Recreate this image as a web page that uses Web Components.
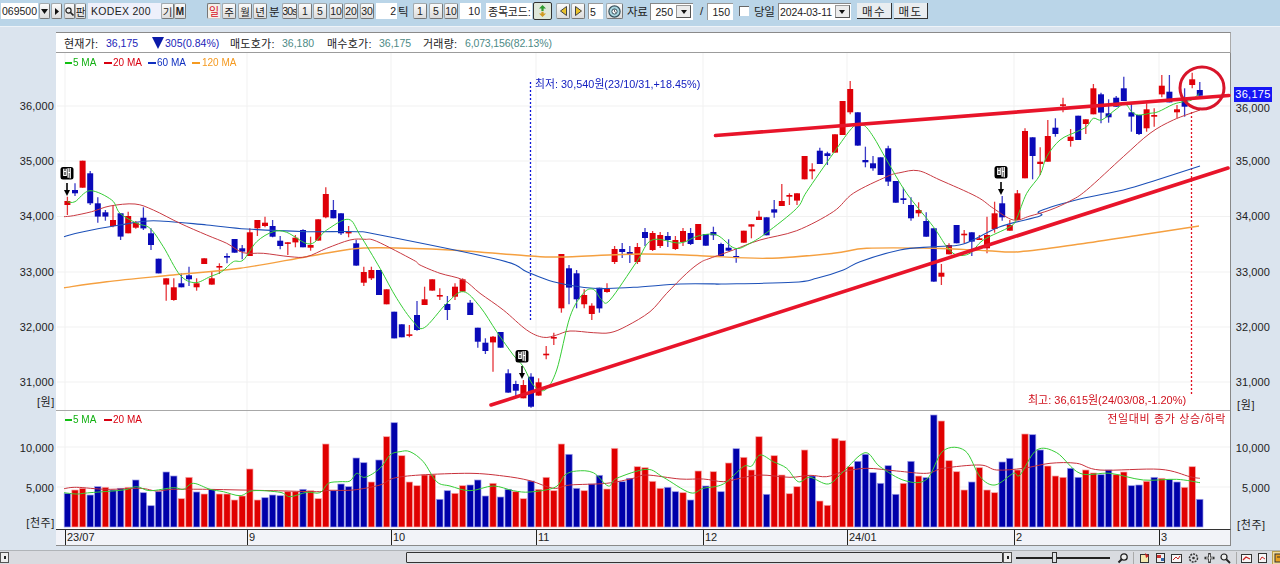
<!DOCTYPE html>
<html lang="ko">
<head>
<meta charset="utf-8">
<title>KODEX 200</title>
<style>
  html, body { margin: 0; height: 100%; overflow: hidden; background: #dbe4ee; }
  body { display: flex; flex-direction: column; width: 1280px; height: 564px;
    font: 11px "Liberation Sans", "Noto Sans CJK KR", sans-serif; color: #222; }
</style>
</head>
<body>
<hts-toolbar></hts-toolbar>
<chart-panel></chart-panel>
<status-bar></status-bar>

<script>
// ---------- small controls ----------
class ToolButton extends HTMLElement {
  constructor() {
    super();
    this.attachShadow({ mode: "open" });
    this.shadowRoot.innerHTML = `
    <style>
      :host { display: inline-flex; align-items: center; justify-content: center; box-sizing: border-box;
        height: 16px; flex: none; overflow: hidden; border: 1px solid #a2a9ad; border-radius: 2px;
        border-right-color: #777; border-bottom-color: #777;
        background: linear-gradient(#fbfbfb, #dcdcdc); font-size: 10.5px; color: #222; white-space: nowrap; }
      :host([active]) { background: #f3efe9; color: #d8101c; border-color: #777 #ccc #ccc #777; font-size: 11px; }
      :host([flat]) { background: #e9edf0; border: 0; border-right: 1px solid #333; border-bottom: 1px solid #333; border-radius: 0; }
      :host([pressed]) { border: 1px solid #333; background: #dfe8da; }
    </style>
    <slot></slot>`;
  }
}
customElements.define("tool-button", ToolButton);

class TextBox extends HTMLElement {
  constructor() {
    super();
    this.attachShadow({ mode: "open" });
    this.shadowRoot.innerHTML = `
    <style>
      :host { display: inline-flex; align-items: center; box-sizing: border-box; height: 16px; flex: none;
        overflow: hidden; padding: 0 1px; background: #fff; font-size: 10.5px; color: #222; white-space: nowrap; }
      :host([right]) { justify-content: flex-end; }
      :host([lav]) { background: #eef0fb; padding-left: 3px; letter-spacing: .3px; }
      :host([sunk]) { border-left: 1px solid #999; border-top: 1px solid #999; }
    </style>
    <slot></slot>`;
  }
}
customElements.define("text-box", TextBox);

class ComboBox extends HTMLElement {
  constructor() {
    super();
    this.attachShadow({ mode: "open" });
    this.shadowRoot.innerHTML = `
    <style>
      :host { display: inline-flex; align-items: center; box-sizing: border-box; height: 17px; flex: none;
        background: #fff; border-left: 1px solid #888; border-top: 1px solid #888; font-size: 10.5px; color: #222; }
      .v { flex: 1; padding: 0 3px 0 1px; white-space: nowrap; text-align: right; }
      .arrow { width: 15px; height: 13px; margin-right: 2px; box-sizing: border-box; border: 1px solid #999;
        border-right-color: #555; border-bottom-color: #555; background: #ececec;
        display: flex; align-items: center; justify-content: center; flex: none; }
      .arrow i { border: 3px solid transparent; border-top: 4px solid #111; border-bottom: 0; }
    </style>
    <span class="v"><slot></slot></span><span class="arrow"><i></i></span>`;
  }
}
customElements.define("combo-box", ComboBox);

// ---------- top toolbar ----------
class HtsToolbar extends HTMLElement {
  constructor() {
    super();
    this.attachShadow({ mode: "open" });
    this.shadowRoot.innerHTML = `
    <style>
      :host { display: flex; align-items: center; box-sizing: border-box; height: 27px; flex: none; padding: 0 0 4px 1px;
        background: #bad5e8; border-bottom: 1px solid #eef3f8; font-size: 12px; color: #222; }
      .t { flex: none; white-space: nowrap; font-size: 11.5px; }
      tool-button.w { width: 14px; }
      tool-button.s { width: 11px; }
      svg { display: block; }
      .chk { flex: none; box-sizing: border-box; width: 10px; height: 10px; margin-left: 6px; background: #fff;
        border-left: 1px solid #666; border-top: 1px solid #666; }
    </style>
    <text-box style="width:37px">069500</text-box>
    <tool-button class="s" style="margin-left:1px"><svg width="7" height="5"><path d="M0 0h7L3.5 5z" fill="#111"/></svg></tool-button>
    <tool-button class="s" style="margin-left:1px"><svg width="4" height="7"><path d="M0 0v7l4-3.5z" fill="#111"/></svg></tool-button>
    <tool-button class="s" style="margin-left:2px"><svg width="9" height="9"><circle cx="3.5" cy="3.5" r="2.6" fill="none" stroke="#222" stroke-width="1.2"/><path d="M5.5 5.5L8.5 8.5" stroke="#222" stroke-width="1.6"/></svg></tool-button>
    <tool-button class="s">판</tool-button>
    <text-box lav style="width:73px;margin-left:2px">KODEX 200</text-box>
    <tool-button style="width:13px">기</tool-button>
    <tool-button style="width:12px;font-size:10px;font-weight:700">M</tool-button>

    <tool-button class="w" active style="margin-left:21px">일</tool-button>
    <tool-button class="w" style="margin-left:1px">주</tool-button>
    <tool-button class="w" style="margin-left:2px">월</tool-button>
    <tool-button class="w" style="margin-left:1px">년</tool-button>
    <span class="t" style="width:12px;margin-left:2px">분</span>
    <tool-button style="width:15px;margin-left:1px;letter-spacing:-.8px">30s</tool-button>
    <tool-button class="w" style="margin-left:1px">1</tool-button>
    <tool-button class="w" style="margin-left:1px">5</tool-button>
    <tool-button class="w" style="margin-left:2px">10</tool-button>
    <tool-button class="w" style="margin-left:1px">20</tool-button>
    <tool-button class="w" style="margin-left:2px">30</tool-button>
    <text-box right style="width:21px;margin-left:2px">2</text-box>
    <span class="t" style="width:12px;margin-left:1px">틱</span>
    <tool-button class="w" style="margin-left:3px">1</tool-button>
    <tool-button class="w" style="margin-left:2px">5</tool-button>
    <tool-button class="w" style="margin-left:1px">10</tool-button>
    <text-box right style="width:21px;margin-left:2px">10</text-box>

    <text-box style="width:46px;margin-left:5px;padding:0 0 0 2px;letter-spacing:-.2px;font-size:11px">종목코드:</text-box>
    <tool-button pressed style="width:19px;height:18px;margin-left:1px">
      <svg width="9" height="12" viewBox="0 0 9 12"><path d="M4.5 0L8 3.5H5.6V6H3.4V3.5H1z" fill="#2d9a2d"/><path d="M4.5 12L1 8.5h2.4V6.8h2.2v1.7H8z" fill="#d09a20"/></svg>
    </tool-button>
    <tool-button style="width:14px;margin-left:4px"><svg width="7" height="10"><path d="M6.5 .5v9L.5 5z" fill="#e8c12c" stroke="#444"/></svg></tool-button>
    <tool-button style="width:14px;margin-left:1px"><svg width="7" height="10"><path d="M.5 .5v9l6-4.5z" fill="#e8c12c" stroke="#444"/></svg></tool-button>
    <text-box sunk style="width:15px;margin-left:3px">5</text-box>
    <tool-button style="width:17px;margin-left:3px"><svg width="13" height="13"><circle cx="6.5" cy="6.5" r="5.6" fill="#a9d6df" stroke="#35505c" stroke-width="1.2"/><circle cx="6.5" cy="6.5" r="2.6" fill="#fff" stroke="#35505c"/><path d="M6.5 4.5v2l1.4 1" stroke="#333" fill="none" stroke-width=".8"/></svg></tool-button>
    <span class="t" style="width:19px;margin-left:4px;letter-spacing:-.4px">자료</span>
    <combo-box style="width:43px;margin-left:4px">250</combo-box>
    <span class="t" style="width:7px;margin-left:7px">/</span>
    <text-box sunk right style="width:26px;height:17px;padding-right:3px">150</text-box>
    <span class="chk"></span>
    <span class="t" style="width:20px;margin-left:5px;letter-spacing:-.4px">당일</span>
    <combo-box style="width:73px;margin-left:4px;letter-spacing:-.1px">2024-03-11</combo-box>
    <tool-button flat style="width:35px;margin-left:6px;letter-spacing:1.5px;font-size:11.5px">매수</tool-button>
    <tool-button flat style="width:34px;margin-left:2px;letter-spacing:1.5px;font-size:11.5px">매도</tool-button>`;
  }
}
customElements.define("hts-toolbar", HtsToolbar);

// ---------- quote strip above the chart ----------
class QuoteBar extends HTMLElement {
  constructor() {
    super();
    this.attachShadow({ mode: "open" });
    this.shadowRoot.innerHTML = `
    <style>
      :host { display: flex; align-items: center; box-sizing: border-box; padding-left: 8px; background: #fff;
        border-top: 1px solid #8a8a8a; border-bottom: 1px solid #9c9c9c; border-right: 1px solid #aaa;
        font-size: 11px; color: #222; white-space: nowrap; }
      span { flex: none; }
      .l { letter-spacing: .25px; }
      .b { color: #1a24b8; font-size: 10.5px; }
      .g { color: #4d8a86; font-size: 10.5px; }
      i { flex: none; border: 6.5px solid transparent; border-top: 12px solid #0a1aa8; border-bottom: 0; margin: 1px 1px 0 0; }
    </style>
    <span class="l" style="width:42px">현재가:</span><span class="b" style="width:46px">36,175</span>
    <i></i><span class="b" style="width:65px">305(0.84%)</span>
    <span class="l" style="width:52px">매도호가:</span><span class="g" style="width:45px">36,180</span>
    <span class="l" style="width:52px">매수호가:</span><span class="g" style="width:44px">36,175</span>
    <span class="l" style="width:42px">거래량:</span><span class="g" style="letter-spacing:-.15px">6,073,156(82.13%)</span>`;
  }
}
customElements.define("quote-bar", QuoteBar);

// ---------- value axis, labels sit at their scale position ----------
class ValueAxis extends HTMLElement {
  constructor() {
    super();
    this.attachShadow({ mode: "open" });
  }
  connectedCallback() {
    const top = +this.getAttribute("top");
    const side = this.getAttribute("side");
    const pos = side == "left" ? "right:2px" : "right:10px";
    const items = (this.getAttribute("ticks") || "").split(";").map((t) => {
      const [label, y] = t.split("@");
      return `<span style="top:${y - top - 7}px;${pos}">${label}</span>`;
    });
    const u = this.getAttribute("unit").split("@");
    items.push(`<span class="u" style="top:${u[1] - top - 7}px;${side == "left" ? "right:1px" : "left:6px"}">${u[0]}</span>`);
    this.shadowRoot.innerHTML = `
    <style>
      :host { display: block; position: relative; font-size: 11px; color: #222; }
      span { position: absolute; line-height: 14px; white-space: nowrap; letter-spacing: .1px; }
      .u { letter-spacing: .6px; font-size: 11px; }
    </style>
    ${items.join("")}<slot></slot>`;
  }
}
customElements.define("value-axis", ValueAxis);

class PriceTag extends HTMLElement {
  constructor() {
    super();
    this.attachShadow({ mode: "open" });
    this.shadowRoot.innerHTML = `
    <style>
      :host { position: absolute; left: 3px; width: 38px; height: 15px; background: #1616f5; color: #fff;
        font-size: 11px; line-height: 15px; text-align: center; letter-spacing: .3px; }
    </style>
    <slot></slot>`;
  }
}
customElements.define("price-tag", PriceTag);

// ---------- chart data, all in page pixels ----------
const X0 = 67.4, STEP = 7.6;
const barX = (i) => X0 + STEP * i;

// 3x readings: colour, body top, body bottom, wick top, wick bottom
function readCandles(oy, s, k = 3) {
  return s.trim().split(/\s+/).map((c) => {
    const v = c.slice(1).split(",").map((n) => oy + n / k);
    const [t, b, wt = t, wb = b] = v;
    return { up: c[0] == "r", t, b, wt, wb };
  });
}

const CANDLES = [
  ...readCandles(150, `r153,165,140,195 b120,130,100,138 r32,113 b70,160,63,165 b160,200,142,218 b187,200,180,212
    r210,228,165,232 b190,260,190,270 r198,250,185,250 r218,233,213,236 b203,235,172,240 b250,285,235,300 b326,370
    r385,404,385,452 r412,450,385,452 b400,412,370,412 b376,388,350,408 r400,412,385,422 r325,342 r385,404,365,404
    r348,352,340,372 b318,322,310,340 b267,308 b295,305,285,328 r247,318,235,318 r210,235,210,258 r218,228,200,232
    b228,260,210,262 b272,288,258,298 r277,280,277,315 r263,277,255,292 b240,292,238,292 r285,293,260,302 r208,272
    r132,202,112,205 b180,205,150,205 b190,250,190,255 r245,250,228,262 b280,347,270,347 r366,398,350,408
    r360,385,350,390 b360,435`),
  ...readCandles(260, `r88,133 b155,235 b193,232 r223,227,195,232 b165,210,123,212 r118,135,80,135 r58,92
    r105,109,85,120 b132,150,108,180 r80,110,70,120 r58,95,55,95 b128,165,120,165 b203,245,203,263 b248,273,235,282
    r230,247,228,335 b216,263 b340,398,328,398 b372,392,362,408 r375,415,360,415 b350,440,340,443 r367,407,355,407
    r281,285,258,298 r231,235,218,255 r-18,145,-18,158 b25,83,15,133 b40,118,30,145 r105,133,88,145 r137,162,130,180
    b83,145,83,158 r86,96,70,98`),
  ...readCandles(0, `r249,262,246,264 b249,252,243,258 b252,255,246,263 r247,262,243,264 b232,238,228,246 r233,250,231,251
    r235,246,232,248 b236,240,232,247 r240,249,236,250 r231,242,228,246 b233,244,228,245 r224,240`, 1),
  ...readCandles(80, `b462,497 b456,466,440,480 b492,528,488,528 b503,512,478,512 b528,532,505,548 r452,488
    r433,440,433,475 r410,420,392,420 b412,466 b388,398,360,413 r363,378,312,378 r345,350,340,375 r340,362,340,375
    r228,298 r268,274,250,298 b212,252,203,252 b220,228,215,255 r163,218 r63,165 r27,97,3,103 b97,197
    b240,247,200,262 b250,265,228,272 b232,285 b205,305,197,318 b303,368 b355,360,323,372 b375,415,352,422
    r390,400,367,410 b423,470,397,470 b445,605 r578,590,552,615 r495,523,490,523 b435,490 r461,465,450,490
    b457,485,457,528 r475,480,465,480 r465,505,410,520 r400,447,365,458 b370,412,348,422 r435,452,420,452
    r340,420,330,420 r153,295,145,295 b172,228,172,298`),
  ...readCandles(60, `r305,312,262,345 r228,305,180,305 b203,222,175,230 r133,137,113,157 r230,243,207,260 b167,240
    r178,192,178,222 r85,163,72,163 b103,158,98,190 b160,172,118,188 b113,140,108,140 b85,123,50,123 b157,170,130,215
    b165,222,165,225 r148,205,130,215 r165,170,145,200 r77,103,45,112 b95,127,45,127 r148,157,135,175 b120,140,85,170
    r58,75,38,85 b90,107,66,107`),
];

// top of each volume bar, 3x reading, r/b colour
const VOL = `b280 r270 r265 b285 b260 r262 b270 b265 r262 b240 b278 b317 b275 b216 b228 r296 r232 b276 r282 b268 r282 r282
  r300 r288 r207 r300 b293 b285 b287 r275 r275 b268 r272 r296 r132 b272 b252 b260 b174 b188 r246 b180
  r110 b68 r167 r246 r257 r225 r225 b298 b272 r280 r257 b255 b240 b288 r250 b291 b268 r275 r296 b243 r268 r232 r272 r132
  b163 b265 r272 b252 b226 r267 r145 b245 b235 r200 r203 r244 r265 b262 b275 r278 b300 r213 b258 r215 b275 r189 b146 r172
  r210 r110 b283 r167 r225 r281 r260 r150
  b228 r303 r316 r115 r122 r200 b184 b163 b218 b250 b197 b283 r250 b184 r228 b233 b45 r63 r182 r215 r270 b246 r203 r270
  r278 b186 b175 r210 r102 b104 b150 r198 r228 r232 b205 b232 r210 r219 b224 b210 r224 r216 b257 b255 r244 b232 r235 b238
  b246 r262 r200 b298`.trim().split(/\s+/).map((v) => ({ up: v[0] == "r", t: 400 + v.slice(1) / 3 }));

// line readings: [offset x, offset y, "X,Y X,Y ..."] in 3x crops, or plain pixels with offset 0 and k=1
function line(...parts) {
  const pts = [];
  for (const [ox, oy, s, k = 3] of parts) {
    for (const p of s.trim().split(/\s+/)) {
      const [a, b] = p.split(",");
      pts.push([ox + a / k, oy + b / k]);
    }
  }
  return smooth(pts);
}

function smooth(p) {
  let d = `M${p[0][0].toFixed(1)} ${p[0][1].toFixed(1)}`;
  for (let i = 0; i < p.length - 1; i++) {
    const a = p[i - 1] || p[i], b = p[i], c = p[i + 1], e = p[i + 2] || c;
    const f = (v) => v.toFixed(1);
    d += `C${f(b[0] + (c[0] - a[0]) / 6)} ${f(b[1] + (c[1] - a[1]) / 6)} ${f(c[0] - (e[0] - b[0]) / 6)} ${f(c[1] - (e[1] - b[1]) / 6)} ${f(c[0])} ${f(c[1])}`;
  }
  return d;
}

const MA5 = line(
  [40, 150, "82,155 105,155 150,122 215,150 240,190 290,220 330,235 370,290 420,375 465,398 510,380 545,365 580,335 610,330 650,275 700,245 740,247 810,282 860,240 925,208 960,255 1020,355"],
  [380, 260, "50,115 100,185 133,203 200,130 250,95 300,140 350,215 400,285 430,320 460,375 495,390 530,330 570,170 610,100 640,88 665,120 690,120 770,5"],
  [0, 0, "652,240 680,243 698,236", 1],
  [700, 80, "50,465 105,505 150,490 200,458 290,385 320,335 400,220 460,140 490,135 520,170 560,240 620,340 700,440 740,500 770,525 810,520 850,480 930,440 950,415 980,340"],
  [1040, 60, "0,345 20,290 60,240 110,215 140,200 160,175 185,180 225,150 255,132 275,155 295,165 330,160 355,155 400,133 430,125 455,120 478,100"]
);
const MA20 = line(
  [40, 150, "72,200 100,197 155,185 210,168 285,162 340,180 420,220 500,255 560,280 610,308 670,310 750,320 800,320 860,295 930,270 975,268 1010,274"],
  [380, 260, "100,0 120,15 180,40 250,60 300,100 370,150 440,210 490,232 530,225 570,213 640,218 690,218 740,198 810,155 860,100 920,40"],
  [700, 80, "0,548 30,535 100,510 180,480 290,452 400,395 460,340 560,290 600,278 655,272 720,300 830,350 880,385 940,420"],
  [0, 0, "1030,216 1050,210 1070,201", 1],
  [1040, 60, "140,390 250,290 330,220 400,180 480,150"]
);
const MA60 = line(
  [40, 150, "72,260 130,245 240,225 340,212 500,225 620,237 800,245 950,245 1020,255"],
  [380, 260, "360,0 440,35 520,65 640,85 760,82 900,72 1020,72"],
  [700, 80, "60,612 280,607 350,595 430,570 480,545 600,510 700,500 790,492 900,440 1020,408"],
  [0, 0, "1040,211 1080,199", 1],
  [1040, 60, "250,390 350,360 480,318"]
);
const MA120 = line(
  [40, 150, "72,413 200,395 400,375 600,355 800,320 930,298 1020,293"],
  [0, 0, "450,250 530,256 560,257 640,254", 1],
  [700, 80, "0,527 200,535 400,520 500,505 700,505 860,512 960,515"],
  [0, 0, "1080,244 1140,235 1199,226", 1]
);

const V5 = line(
  [40, 400, "72,278 110,282 150,278 250,270 290,260 330,272 400,263 430,268 460,250 510,268 550,275 600,287 640,272 720,277 750,290 800,277 840,278 865,250 900,245 930,243 950,220 975,232"],
  [380, 400, "0,205 30,165 60,155 90,155 130,185 170,245 210,258 270,272 340,258 400,272 450,276 525,262 555,225 590,213 640,218 685,258 710,235 800,208 850,232 930,278 970,265 1030,252 1090,200 1115,198 1140,165 1180,185 1220,205 1255,245"],
  [810, 400, "0,232 55,252 100,215 165,158 210,200 285,242 350,238 400,152 465,152 510,230 555,255 610,220 630,225 680,150 740,158 810,220 900,220 1000,240 1100,238 1170,248"]
);
const V20 = line(
  [40, 400, "72,266 110,262 200,268 300,265 350,273 400,268 500,268 600,270 700,272 830,275 870,271 940,270 1020,255"],
  [380, 400, "40,235 120,225 270,220 370,228 450,242 520,265 570,255 680,250 760,235 800,225 900,237 970,237 1030,245 1080,235 1140,225 1230,232"],
  [810, 400, "0,226 50,230 100,215 170,205 260,213 350,220 400,205 510,195 560,210 640,205 720,190 800,190 870,210 1050,208 1140,230 1170,235"]
);

const MONTHS = [65, 247, 391, 536, 703, 847, 1014, 1159];

// ---------- price pane ----------
class PriceChart extends HTMLElement {
  constructor() {
    super();
    this.attachShadow({ mode: "open" });
  }
  connectedCallback() {
    const RED = "#df0008", BLUE = "#0a0ab8";
    const grid = [106, 161, 216.5, 272, 327, 382]
      .map((y) => `<path d="M57 ${y}H1230"/>`).concat(MONTHS.map((x) => `<path d="M${x} 53V410"/>`)).join("");
    const candles = CANDLES.map((c, i) => {
      const x = barX(i).toFixed(1), col = c.up ? RED : BLUE;
      const h = Math.max(c.b - c.t, 1.6);
      return `<path d="M${x} ${c.wt.toFixed(1)}V${c.wb.toFixed(1)}" stroke="${col}" stroke-width="1.3" opacity=".8"/>` +
        `<rect x="${x - 3}" y="${c.t.toFixed(1)}" width="6" height="${h.toFixed(1)}" fill="${col}"/>`;
    }).join("");
    const badge = (x, y) => `
      <rect x="${x - 6.5}" y="${y}" width="13" height="12.5" rx="2.5" fill="#000"/>
      <text x="${x}" y="${y + 10}" fill="#fff" font-size="10" font-weight="700" text-anchor="middle">배</text>
      <path d="M${x} ${y + 16}V${y + 26}" stroke="#000" stroke-width="1.6"/>
      <path d="M${x - 3} ${y + 23}L${x} ${y + 29}L${x + 3} ${y + 23}z" fill="#000"/>`;
    this.shadowRoot.innerHTML = `
    <style>
      :host { display: block; position: relative; background: #fff; border-right: 1px solid #888; box-sizing: border-box; }
      svg { display: block; font-family: "Liberation Sans", "Noto Sans CJK KR", sans-serif; filter: blur(.25px); }
      .grid path { stroke: #f1f1f1; stroke-width: 1; fill: none; }
      .ma path { fill: none; stroke-width: 1; }
      .legend { font-size: 10px; }
    </style>
    <svg width="1175" height="357" viewBox="56 53 1175 357">
      <g class="grid">${grid}</g>
      <path d="M530.5 82V320" stroke="#1018d8" stroke-width="1.3" stroke-dasharray="2 2" fill="none"/>
      <path d="M1191.5 112V396" stroke="#e01020" stroke-width="1.3" stroke-dasharray="2 2" fill="none"/>
      <g>${candles}</g>
      <g class="ma">
        <path d="${MA120}" stroke="#f5a040" style="stroke-width:1.4"/>
        <path d="${MA60}" stroke="#1c50b8" style="stroke-width:1.1"/>
        <path d="${MA20}" stroke="#c83a42"/>
        <path d="${MA5}" stroke="#36cc36"/>
      </g>
      ${badge(67, 167)}${badge(522, 350)}${badge(1001, 166)}
      <g stroke="#e8142a" stroke-width="3.6" stroke-linecap="round" fill="none">
        <path d="M491 405L1228 168"/>
        <path d="M715.500 135.500L1229 95.500"/>
      </g>
      <ellipse cx="1202" cy="88" rx="22" ry="21" fill="none" stroke="#d8142a" stroke-width="3"/>
      <g class="legend">
        <path d="M65 63h7" stroke="#12c012" stroke-width="2"/><text x="73" y="66" fill="#12b012">5 MA</text>
        <path d="M104 63h8" stroke="#d80010" stroke-width="2"/><text x="113" y="66" fill="#d80010">20 MA</text>
        <path d="M148 63h8" stroke="#1030c0" stroke-width="2"/><text x="157" y="66" fill="#1030c0">60 MA</text>
        <path d="M192 63h8" stroke="#f59a20" stroke-width="2"/><text x="202" y="66" fill="#f59a20">120 MA</text>
      </g>
      <text x="535" y="88" font-size="10.8" letter-spacing=".05" fill="#1420c0">최저: 30,540원(23/10/31,+18.45%)</text>
      <text x="1028" y="404" font-size="11" fill="#d0101c">최고: 36,615원(24/03/08,-1.20%)</text>
    </svg>`;
  }
}
customElements.define("price-chart", PriceChart);

// ---------- volume pane ----------
class VolumeChart extends HTMLElement {
  constructor() {
    super();
    this.attachShadow({ mode: "open" });
  }
  connectedCallback() {
    const base = 527;
    const grid = [447, 487].map((y) => `<path d="M57 ${y}H1230"/>`)
      .concat(MONTHS.map((x) => `<path d="M${x} 411V529"/>`)).join("");
    const bars = VOL.map((v, i) => {
      const x = (barX(i) - 3.2).toFixed(1);
      return `<rect x="${x}" y="${v.t.toFixed(1)}" width="6.4" height="${(base - v.t).toFixed(1)}" fill="${v.up ? "#e00000" : "#0000aa"}" stroke="${v.up ? "#f8a8a8" : "#9a9ae8"}" stroke-width=".7"/>`;
    }).join("");
    this.shadowRoot.innerHTML = `
    <style>
      :host { display: block; background: #fff; border-right: 1px solid #888; box-sizing: border-box; }
      svg { display: block; font-family: "Liberation Sans", "Noto Sans CJK KR", sans-serif; filter: blur(.25px); }
      .grid path { stroke: #f1f1f1; fill: none; }
      .ma path { fill: none; stroke-width: 1; }
    </style>
    <svg width="1175" height="118" viewBox="56 411 1175 118">
      <g class="grid">${grid}</g>
      <g>${bars}</g>
      <g class="ma">
        <path d="${V20}" stroke="#c8303a"/>
        <path d="${V5}" stroke="#36cc36"/>
      </g>
      <path d="M65 420h7" stroke="#12c012" stroke-width="2"/><text x="73" y="423" font-size="10" fill="#12b012">5 MA</text>
      <path d="M104 420h8" stroke="#d80010" stroke-width="2"/><text x="113" y="423" font-size="10" fill="#d80010">20 MA</text>
      <text x="1226" y="423" font-size="11" letter-spacing=".65" fill="#d0101c" text-anchor="end">전일대비 종가 상승/하락</text>
    </svg>`;
  }
}
customElements.define("volume-chart", VolumeChart);

// ---------- date axis ----------
class DateAxis extends HTMLElement {
  constructor() {
    super();
    this.attachShadow({ mode: "open" });
    const labels = ["23/07", "9", "10", "11", "12", "24/01", "2", "3"];
    const cells = labels.map((t, i) => {
      const w = (MONTHS[i + 1] || 1231) - MONTHS[i];
      return `<span style="width:${w}px">${t}</span>`;
    }).join("");
    this.shadowRoot.innerHTML = `
    <style>
      :host { display: flex; box-sizing: border-box; padding-left: 9px; background: #f2f3f8; border-top: 1px solid #333;
        border-bottom: 1px solid #8a8a8a; border-right: 1px solid #888; font-size: 11px; line-height: 15px; color: #222; }
      span { box-sizing: border-box; flex: none; border-left: 1px solid #222; padding-left: 1px; }
    </style>
    ${cells}`;
  }
}
customElements.define("date-axis", DateAxis);

// ---------- page grid of the chart ----------
class ChartPanel extends HTMLElement {
  constructor() {
    super();
    this.attachShadow({ mode: "open" });
    this.shadowRoot.innerHTML = `
    <style>
      :host { display: grid; flex: none; grid-template-columns: 56px 1175px 49px; grid-template-rows: 21px 357px 2px 118px 16px;
        margin-top: 5px; height: 518px; }
      quote-bar { grid-column: 2; grid-row: 1; }
      price-chart { grid-column: 2; grid-row: 2; }
      .sep { grid-column: 2; grid-row: 3; background: #a8a8a8; border-right: 1px solid #888; margin-top: -1px; height: 2px; }
      volume-chart { grid-column: 2; grid-row: 4; margin-top: -1px; height: 118px; }
      date-axis { grid-column: 2; grid-row: 5; margin-top: -1px; }
      .la1 { grid-column: 1; grid-row: 1 / 4; }
      .ra1 { grid-column: 3; grid-row: 1 / 4; }
      .la2 { grid-column: 1; grid-row: 4; }
      .ra2 { grid-column: 3; grid-row: 4; }
    </style>
    <value-axis class="la1" side="left" top="32" unit="[원]@402"
      ticks="36,000@106;35,000@161;34,000@216;33,000@272;32,000@327;31,000@382"></value-axis>
    <quote-bar></quote-bar>
    <value-axis class="ra1" side="right" top="32" unit="[원]@405"
      ticks="36,000@108;35,000@161;34,000@216;33,000@272;32,000@327;31,000@382"><price-tag style="top:55px">36,175</price-tag></value-axis>
    <price-chart></price-chart>
    <div class="sep"></div>
    <value-axis class="la2" side="left" top="411" unit="[천주]@522" ticks="10,000@447;5,000@487"></value-axis>
    <volume-chart></volume-chart>
    <value-axis class="ra2" side="right" top="411" unit="[천주]@524" ticks="10,000@447;5,000@487"></value-axis>
    <date-axis></date-axis>`;
  }
}
customElements.define("chart-panel", ChartPanel);

// ---------- bottom scroll and tool strip ----------
class StatusBar extends HTMLElement {
  constructor() {
    super();
    this.attachShadow({ mode: "open" });
    const icon = (inner) => `<svg width="13" height="12" viewBox="0 0 13 12">${inner}</svg>`;
    this.shadowRoot.innerHTML = `
    <style>
      :host { display: flex; align-items: center; flex: none; height: 14px; background: #d9dbe0;
        border-top: 1px solid #b0b4b8; box-sizing: border-box; overflow: hidden; }
      .btn { flex: none; box-sizing: border-box; width: 9px; height: 11px; background: #eee; border: 1px solid #555;
        display: flex; align-items: center; justify-content: center; }
      .btn i { width: 2px; height: 3px; background: #222; }
      .track { flex: none; width: 397px; height: 13px; background: #d9dbe0; }
      .thumb { flex: none; box-sizing: border-box; width: 597px; height: 11px; background: #e6e7ea; border: 1px solid #333; border-radius: 1px; }
      .slider { flex: none; position: relative; width: 94px; height: 11px; margin-left: 4px; }
      .slider::before { content: ""; position: absolute; left: 0; right: 0; top: 5px; height: 2px; background: #222; }
      .knob { position: absolute; left: 36px; top: 0; width: 5px; height: 11px; box-sizing: border-box; background: #dfe2e6; border: 1px solid #333; }
      .tools { display: flex; align-items: center; margin-left: 7px; }
      .tools svg { flex: none; margin-right: 3.3px; }
      .bar { flex: none; width: 1px; height: 12px; background: #aaa; margin: 0 3.5px 0 0; }
    </style>
    <span class="btn"><i></i></span>
    <span class="track"></span>
    <span class="thumb"></span>
    <span class="btn"><i></i></span>
    <span class="slider"><span class="knob"></span></span>
    <span class="tools">
      ${icon('<circle cx="7" cy="5" r="3.2" fill="#eee" stroke="#222" stroke-width="1.3"/><path d="M4.500 7.500L1.500 10.500" stroke="#222" stroke-width="2"/>')}
      <span class="bar"></span>
      ${icon('<rect x="2.500" y="2.500" width="8" height="8" fill="#f4e9b0" stroke="#333"/><path d="M7 1l4 3-3 2z" fill="#c22"/>')}
      ${icon('<rect x="2.500" y="1.500" width="8" height="9" fill="#eee" stroke="#333"/><path d="M3 3h4v3H3z" fill="#c33"/><path d="M7 6h3v3H7z" fill="#36a"/>')}
      ${icon('<rect x="1.500" y="2.500" width="10" height="8" fill="#f6f6f6" stroke="#333"/><path d="M3 8l3-3 2 2 2-3" fill="none" stroke="#c22"/>')}
      ${icon('<circle cx="6.500" cy="6" r="4" fill="none" stroke="#333" stroke-width="1.5" stroke-dasharray="2 1"/><circle cx="6.500" cy="6" r="1.300" fill="#333"/>')}
      ${icon('<path d="M6.500 1v10M1.500 6h10" stroke="#333" stroke-width="2.600"/><path d="M6.500 2.500v7M3 6h7" stroke="#eee"/>')}
      ${icon('<circle cx="5" cy="5" r="3" fill="#eee" stroke="#222" stroke-width="1.2"/><path d="M7.500 7.500L11 11" stroke="#222" stroke-width="1.800"/>')}
      <span class="bar"></span>
      ${icon('<rect x="1.500" y="2.500" width="10" height="8" fill="#f6f6f6" stroke="#333"/><path d="M3 8l3-3 4 2" fill="none" stroke="#c22" stroke-width="1.300"/>')}
      ${icon('<rect x="2.500" y="1.500" width="8" height="9" fill="#f6f6f6" stroke="#333"/><path d="M4 8l2-3 3 2" fill="none" stroke="#c22"/>')}
      <svg width="14" height="12" viewBox="0 0 14 12" style="outline:1px solid #b8a050;background:#f0dca0"><rect x="2" y="2" width="10" height="8" fill="#e8a020" stroke="#333"/><path d="M4 5h6" stroke="#333"/></svg>
    </span>`;
  }
}
customElements.define("status-bar", StatusBar);
</script>
</body>
</html>
